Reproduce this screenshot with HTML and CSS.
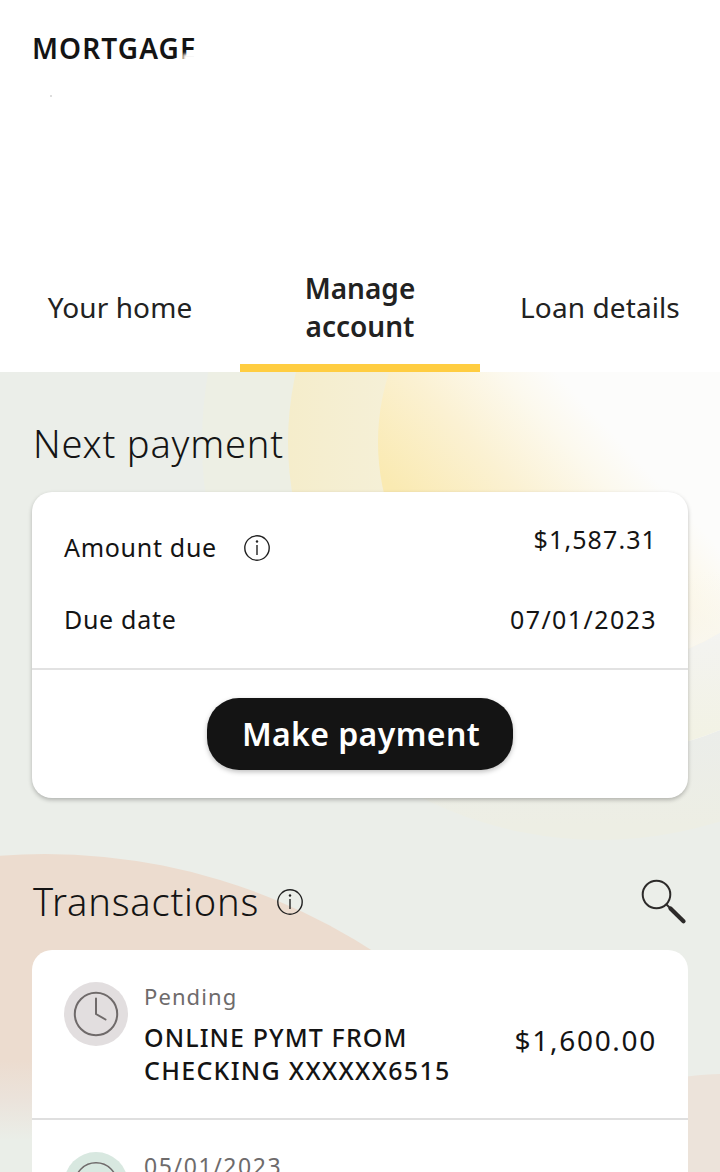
FILE: index.html
```html
<!DOCTYPE html>
<html lang="en">
<head>
  <meta charset="utf-8">
  <title>Mortgage</title>
  <link rel="stylesheet" href="styles.css">
</head>
<body>
  <header class="header">
    <h1 class="page-title">MORTGAGE</h1>
    <span class="speck"></span>
  </header>

  <nav class="tabs">
    <a class="tab">Your home</a>
    <a class="tab active">Manage<br>account</a>
    <a class="tab">Loan details</a>
  </nav>

  <main class="content">
    <svg class="backdrop" width="720" height="800" viewBox="0 372 720 800">
      <defs>
        <linearGradient id="sun" gradientUnits="userSpaceOnUse" x1="395" y1="490" x2="540" y2="355">
          <stop offset="0" stop-color="#faeab2"/>
          <stop offset="0.45" stop-color="#fbf1d2"/>
          <stop offset="0.8" stop-color="#fcf9ee"/>
          <stop offset="1" stop-color="#fcfcfb"/>
        </linearGradient>
        <linearGradient id="sun-foot" gradientUnits="userSpaceOnUse" x1="0" y1="570" x2="0" y2="650">
          <stop offset="0" stop-color="#f9f7ef" stop-opacity="0"/>
          <stop offset="1" stop-color="#f9f7ef"/>
        </linearGradient>
        <linearGradient id="ring" gradientUnits="userSpaceOnUse" x1="288" y1="0" x2="720" y2="0">
          <stop offset="0" stop-color="#f5edcb"/>
          <stop offset="0.25" stop-color="#f5f0d8"/>
          <stop offset="0.7" stop-color="#fafafa"/>
          <stop offset="1" stop-color="#fafafa"/>
        </linearGradient>
        <linearGradient id="ring-foot" gradientUnits="userSpaceOnUse" x1="0" y1="560" x2="0" y2="740">
          <stop offset="0" stop-color="#fafafa"/>
          <stop offset="0.45" stop-color="#f3f3f0"/>
          <stop offset="1" stop-color="#f2f2e4"/>
        </linearGradient>
        <linearGradient id="halo" gradientUnits="userSpaceOnUse" x1="0" y1="725" x2="0" y2="825">
          <stop offset="0" stop-color="#ebedea"/>
          <stop offset="1" stop-color="#edeee4"/>
        </linearGradient>
        <linearGradient id="peach" gradientUnits="userSpaceOnUse" x1="0" y1="1060" x2="0" y2="1140">
          <stop offset="0" stop-color="#ecdccf"/>
          <stop offset="0.5" stop-color="#ebe3db"/>
          <stop offset="1" stop-color="#eaeee8"/>
        </linearGradient>
        <clipPath id="upper">
          <rect y="372" width="720" height="188"/>
        </clipPath>
        <clipPath id="lower">
          <rect y="560" width="720" height="612"/>
        </clipPath>
      </defs>
      <rect y="372" width="720" height="800" fill="#ebeee9"/>
      <circle cx="600" cy="442" r="398" fill="#edefe4" clip-path="url(#upper)"/>
      <circle cx="600" cy="442" r="398" fill="url(#halo)" clip-path="url(#lower)"/>
      <circle cx="600" cy="442" r="312" fill="url(#ring)"/>
      <circle cx="600" cy="442" r="312" fill="url(#ring-foot)" clip-path="url(#lower)"/>
      <circle cx="602" cy="442" r="224" fill="url(#sun)"/>
      <circle cx="602" cy="442" r="224" fill="url(#sun-foot)"/>
      <circle cx="45" cy="1457" r="603" fill="url(#peach)"/>
      <circle cx="725" cy="1374" r="300" fill="#ece3da"/>
    </svg>

    <h2 class="section-title">Next payment</h2>
    <section class="card payment">
      <div class="row amount">
        <span class="label">Amount due
          <svg class="info" viewBox="0 0 26 26"><circle cx="13" cy="13" r="12.2"/><path d="M13 10v10"/><circle class="dot" cx="13" cy="6.5" r="1.2"/></svg>
        </span>
        <span class="value">$1,587.31</span>
      </div>
      <div class="row due">
        <span class="label">Due date</span>
        <span class="value">07/01/2023</span>
      </div>
      <div class="actions">
        <button class="pay">Make payment</button>
      </div>
    </section>

    <div class="section-head">
      <h2 class="section-title">Transactions</h2>
      <svg class="info" viewBox="0 0 26 26"><circle cx="13" cy="13" r="12.2"/><path d="M13 10v10"/><circle class="dot" cx="13" cy="6.5" r="1.2"/></svg>
      <svg class="search" viewBox="0 0 46 46"><circle cx="15.5" cy="15.5" r="13.8"/><path d="M25.5 25.5l4 4"/><path class="handle" d="M29.5 29.5l13 12.8"/></svg>
    </div>
    <section class="card list">
      <div class="item">
        <span class="badge pending">
          <svg class="clock" viewBox="0 0 46 46"><circle cx="23" cy="23" r="21.2"/><path d="M23 7.5V23l9.5 5.5"/></svg>
        </span>
        <div class="details">
          <div class="status">Pending</div>
          <div class="name">ONLINE PYMT FROM</div>
          <div class="name">CHECKING XXXXXX6515</div>
        </div>
        <span class="total">$1,600.00</span>
      </div>
      <div class="item">
        <span class="badge posted">
          <svg class="clock" viewBox="0 0 46 46"><circle class="thin" cx="23" cy="23" r="21.2"/></svg>
        </span>
        <div class="details">
          <div class="status date">05/01/2023</div>
        </div>
      </div>
    </section>
  </main>
</body>
</html>
```

FILE: styles.css
```css
* {
  box-sizing: border-box;
}
body {
  margin: 0;
  height: 1172px;
  overflow: hidden;
  background: #fff;
  color: #141414;
  font-family: "Noto Sans", "Open Sans", sans-serif;
}
h1, h2 {
  margin: 0;
}
.header {
  height: 252px;
  padding: 29px 32px 0;
}
.page-title {
  position: relative;
  width: 170px;
  font-size: 28px;
  line-height: 38px;
  font-weight: 600;
  letter-spacing: 1.1px;
  white-space: nowrap;
}
/* soft fade over the foot of the last letters */
.page-title::after {
  content: "";
  position: absolute;
  left: 151px;
  top: 25px;
  width: 30px;
  height: 14px;
  background: #fff;
  filter: blur(1.5px);
}
.speck {
  display: block;
  width: 2px;
  height: 2px;
  margin: 28px 0 0 18px;
  background: #ddd;
}

.tabs {
  display: grid;
  grid-template-columns: repeat(3, 240px);
  height: 120px;
}
.tab {
  display: flex;
  align-items: center;
  justify-content: center;
  border-bottom: 8px solid transparent;
  padding-bottom: 3px;
  color: #222;
  font-size: 28px;
  line-height: 38px;
  letter-spacing: 0.1px;
  text-align: center;
}
.tab.active {
  border-color: #ffcd41;
  font-weight: 600;
  letter-spacing: 0;
}

.content {
  position: relative;
  height: 800px;
  padding: 44px 32px 0;
  overflow: hidden;
}
.backdrop {
  position: absolute;
  left: 0;
  top: 0;
  z-index: -1;
}
.section-title {
  height: 54px;
  padding-left: 1px;
  font-size: 38px;
  line-height: 54px;
  font-weight: 300;
  letter-spacing: 0.8px;
}
.card {
  background: #fff;
  border-radius: 20px;
}
.payment {
  height: 306px;
  margin-top: 22px;
  padding-top: 19px;
  box-shadow: 0 2px 4px rgba(0, 0, 0, 0.25);
}
.row {
  display: flex;
  justify-content: space-between;
  height: 72px;
  padding: 0 31px 0 32px;
  font-size: 25px;
  line-height: 72px;
  letter-spacing: 0.7px;
}
.label {
  display: flex;
  align-items: center;
  gap: 27px;
}
.value {
  letter-spacing: 1.4px;
}
.amount .value {
  line-height: 56px;
  letter-spacing: 1.1px;
}
.info {
  width: 26px;
  height: 26px;
  margin-top: 1px;
  fill: none;
  stroke: #222;
  stroke-width: 1.4;
}
.info .dot {
  fill: #222;
  stroke: none;
}
.actions {
  display: flex;
  justify-content: center;
  margin-top: 13px;
  padding-top: 28px;
  border-top: 2px solid #e2e2e2;
}
.pay {
  width: 306px;
  height: 72px;
  padding: 0 0 0 2px;
  border: 0;
  border-radius: 32px;
  background: #141414;
  box-shadow: 0 2px 5px rgba(0, 0, 0, 0.25);
  color: #fff;
  font: 600 32px/70px "Noto Sans", sans-serif;
  letter-spacing: 0.4px;
}

.section-head {
  display: flex;
  align-items: center;
  height: 54px;
  margin: 76px 0 22px;
}
.section-head .info {
  margin: 2px 0 0 18px;
}
.search {
  width: 46px;
  height: 46px;
  margin: 2px 1px 0 auto;
  fill: none;
  stroke: #2c2a29;
  stroke-width: 2;
}
.search .handle {
  stroke-width: 4.2;
  stroke-linecap: round;
}

.list {
  height: 300px;
}
.item {
  display: flex;
  height: 170px;
  padding: 32px 32px 0;
  border-bottom: 2px solid #dfdfdf;
}
.badge {
  display: flex;
  align-items: center;
  justify-content: center;
  width: 64px;
  height: 64px;
  border-radius: 50%;
}
.pending {
  background: #e2dedf;
}
.posted {
  background: #d8e8e0;
}
.clock {
  width: 46px;
  height: 46px;
  fill: none;
  stroke: #6f6a6a;
  stroke-width: 2;
  stroke-linecap: round;
}
.clock .thin {
  stroke-width: 1.5;
}
.details {
  flex: 1;
  margin-left: 16px;
}
.status {
  height: 29px;
  color: #6e6b6b;
  font-size: 22px;
  line-height: 28px;
  letter-spacing: 1.1px;
}
.date {
  font-size: 23px;
  letter-spacing: 1.6px;
}
.name {
  height: 33px;
  font-size: 25px;
  line-height: 52px;
  font-weight: 500;
  letter-spacing: 1.1px;
  white-space: nowrap;
}
.name + .name {
  letter-spacing: 1.3px;
}
.total {
  margin: 31px -1px 0 0;
  font-size: 28px;
  line-height: 54px;
  letter-spacing: 1.7px;
}
```
